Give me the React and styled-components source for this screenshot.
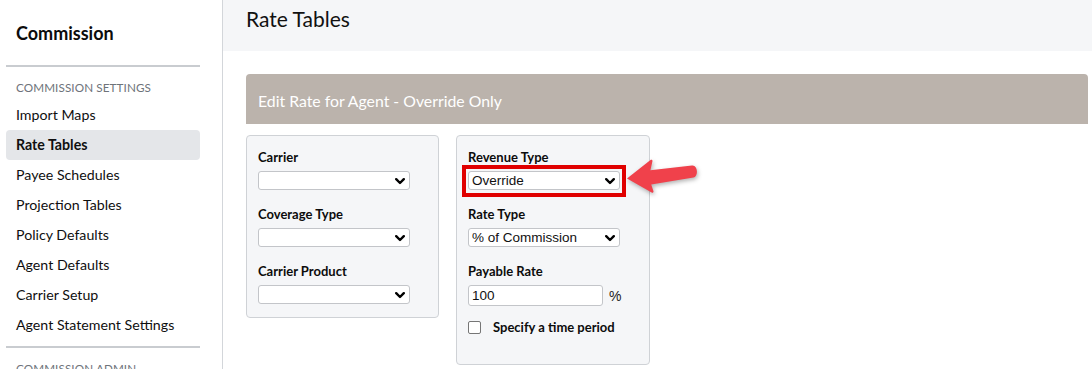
import React from "react";
import styled, { createGlobalStyle } from "styled-components";

const GlobalStyle = createGlobalStyle`
  html, body {
    margin: 0;
    padding: 0;
    background: #ffffff;
  }
  body {
    font-family: Lato, "Noto Sans", sans-serif;
    color: #111;
  }
  * {
    box-sizing: border-box;
  }
`;

const Page = styled.div`
  display: flex;
  height: 369px;
  overflow: hidden;
`;

const Sidebar = styled.aside`
  width: 223px;
  flex-shrink: 0;
  border-right: 1px solid #d3d6da;
  padding: 0 22px 0 6px;
`;

const SideTitle = styled.h2`
  margin: 0;
  padding: 22px 0 0 10px;
  height: 65px;
  font-size: 18px;
  font-weight: 700;
  color: #0c0c0c;
`;

const Divider = styled.hr`
  margin: 0;
  border: none;
  border-top: 2px solid #c9ccd0;
`;

const SectionLabel = styled.div`
  padding: 13px 0 0 10px;
  height: 33px;
  font-size: 11.7px;
  color: #6e737a;
  letter-spacing: 0.1px;
`;

const NavList = styled.nav`
  display: flex;
  flex-direction: column;
  padding-bottom: 6px;
`;

const NavItem = styled.a`
  display: block;
  height: 30px;
  line-height: 30px;
  padding-left: 10px;
  border-radius: 4px;
  font-size: 14.2px;
  color: #0f0f0f;
  text-decoration: none;
  font-weight: ${(p) => (p.$active ? 700 : 400)};
  background: ${(p) => (p.$active ? "#e4e6e9" : "transparent")};
`;

const Main = styled.main`
  flex: 1;
  display: flex;
  flex-direction: column;
`;

const TopBar = styled.header`
  height: 51px;
  background: #f5f6f8;
  padding: 6px 0 0 23px;
`;

const PageTitle = styled.h1`
  margin: 0;
  font-size: 21px;
  font-weight: 400;
  color: #111;
`;

const Content = styled.section`
  padding: 23px 4px 0 23px;
`;

const PanelHeader = styled.div`
  height: 50px;
  background: #bbb3ac;
  border-radius: 4px 4px 0 0;
  padding: 17px 0 0 12px;
  font-size: 15.8px;
  color: #ffffff;
`;

const CardRow = styled.div`
  display: flex;
  align-items: flex-start;
  gap: 17px;
  margin-top: 11px;
`;

const Card = styled.div`
  width: ${(p) => p.$width}px;
  height: ${(p) => p.$height}px;
  background: #f5f6f8;
  border: 1px solid #cfd2d6;
  border-radius: 4px;
  padding: 13px 0 0 11px;
`;

const Field = styled.div`
  position: relative;
  margin-bottom: 16px;
`;

const Label = styled.div`
  font-size: 13px;
  font-weight: 700;
  line-height: 16px;
  color: #0c0c0c;
  margin-bottom: 6px;
`;

const SelectWrap = styled.div`
  position: relative;
  width: 152px;
`;

const Select = styled.select`
  appearance: none;
  display: block;
  width: 152px;
  height: 19px;
  padding: 0 0 0 3px;
  border: 1px solid #c3c5c9;
  border-radius: 3px;
  background: #ffffff;
  font-family: "Liberation Sans", Arial, sans-serif;
  font-size: 13.5px;
  color: #111;
`;

const Chevron = styled.svg`
  position: absolute;
  right: 5px;
  top: 7px;
  pointer-events: none;
`;

const Highlight = styled.div`
  position: absolute;
  left: -6px;
  top: -6px;
  width: 164px;
  height: 32px;
  border: 4px solid #e00000;
  pointer-events: none;
`;

const RateRow = styled.div`
  display: flex;
  align-items: center;
  gap: 6px;
`;

const RateInput = styled.input`
  width: 135px;
  height: 21px;
  border: 1px solid #c3c5c9;
  border-radius: 3px;
  padding: 0 3px;
  background: #fff;
  font-family: "Liberation Sans", Arial, sans-serif;
  font-size: 13.5px;
  color: #111;
`;

const Unit = styled.span`
  font-family: "Liberation Sans", Arial, sans-serif;
  font-size: 14px;
  color: #222;
`;

const CheckRow = styled.label`
  display: flex;
  align-items: center;
  margin-top: -3px;
  font-size: 13px;
  font-weight: 700;
  color: #0c0c0c;
`;

const CheckBox = styled.span`
  width: 13px;
  height: 13px;
  border: 1px solid #767676;
  border-radius: 2px;
  background: #fff;
  margin-right: 12px;
  flex-shrink: 0;
`;

const Arrow = styled.svg`
  position: absolute;
  left: 159px;
  top: -12px;
  overflow: visible;
  filter: drop-shadow(1px 2px 2px rgba(0, 0, 0, 0.3));
  pointer-events: none;
`;

const ChevronIcon = () => (
  <Chevron width="10" height="7" viewBox="0 0 10 7">
    <polyline
      points="1.2,1.2 5,5 8.8,1.2"
      fill="none"
      stroke="#000"
      strokeWidth="2.4"
      strokeLinecap="round"
      strokeLinejoin="round"
    />
  </Chevron>
);

const SelectBox = ({ value, children }) => (
  <SelectWrap>
    <Select defaultValue={value}>{children}</Select>
    <ChevronIcon />
  </SelectWrap>
);

const navItems = [
  "Import Maps",
  "Rate Tables",
  "Payee Schedules",
  "Projection Tables",
  "Policy Defaults",
  "Agent Defaults",
  "Carrier Setup",
  "Agent Statement Settings",
];

export default function App() {
  return (
    <>
      <GlobalStyle />
      <Page>
        <Sidebar>
          <SideTitle>Commission</SideTitle>
          <Divider />
          <SectionLabel>COMMISSION SETTINGS</SectionLabel>
          <NavList>
            {navItems.map((item) => (
              <NavItem key={item} $active={item === "Rate Tables"}>
                {item}
              </NavItem>
            ))}
          </NavList>
          <Divider />
          <SectionLabel>COMMISSION ADMIN</SectionLabel>
        </Sidebar>
        <Main>
          <TopBar>
            <PageTitle>Rate Tables</PageTitle>
          </TopBar>
          <Content>
            <PanelHeader>Edit Rate for Agent - Override Only</PanelHeader>
            <CardRow>
              <Card $width={193} $height={183}>
                <Field>
                  <Label>Carrier</Label>
                  <SelectBox value="">
                    <option value=""></option>
                  </SelectBox>
                </Field>
                <Field>
                  <Label>Coverage Type</Label>
                  <SelectBox value="">
                    <option value=""></option>
                  </SelectBox>
                </Field>
                <Field>
                  <Label>Carrier Product</Label>
                  <SelectBox value="">
                    <option value=""></option>
                  </SelectBox>
                </Field>
              </Card>
              <Card $width={194} $height={230}>
                <Field>
                  <Label>Revenue Type</Label>
                  <SelectWrap>
                    <Select defaultValue="override">
                      <option value="override">Override</option>
                    </Select>
                    <ChevronIcon />
                    <Highlight />
                    <Arrow width="72" height="34" viewBox="0 0 72 34">
                      <path
                        d="M0 19.5 L23.5 1 C24.6 0.2 25.8 1 25.4 2.4 L23.4 11.2 L65 6.4 C71 5.8 71.6 17.6 66.4 18.6 L24.2 25.4 L26.4 32 C26.8 33.4 25.4 34.2 24.2 33.3 Z"
                        fill="#f0414b"
                      />
                    </Arrow>
                  </SelectWrap>
                </Field>
                <Field>
                  <Label>Rate Type</Label>
                  <SelectBox value="pct">
                    <option value="pct">% of Commission</option>
                  </SelectBox>
                </Field>
                <Field>
                  <Label>Payable Rate</Label>
                  <RateRow>
                    <RateInput defaultValue="100" />
                    <Unit>%</Unit>
                  </RateRow>
                </Field>
                <CheckRow>
                  <CheckBox />
                  Specify a time period
                </CheckRow>
              </Card>
            </CardRow>
          </Content>
        </Main>
      </Page>
    </>
  );
}
